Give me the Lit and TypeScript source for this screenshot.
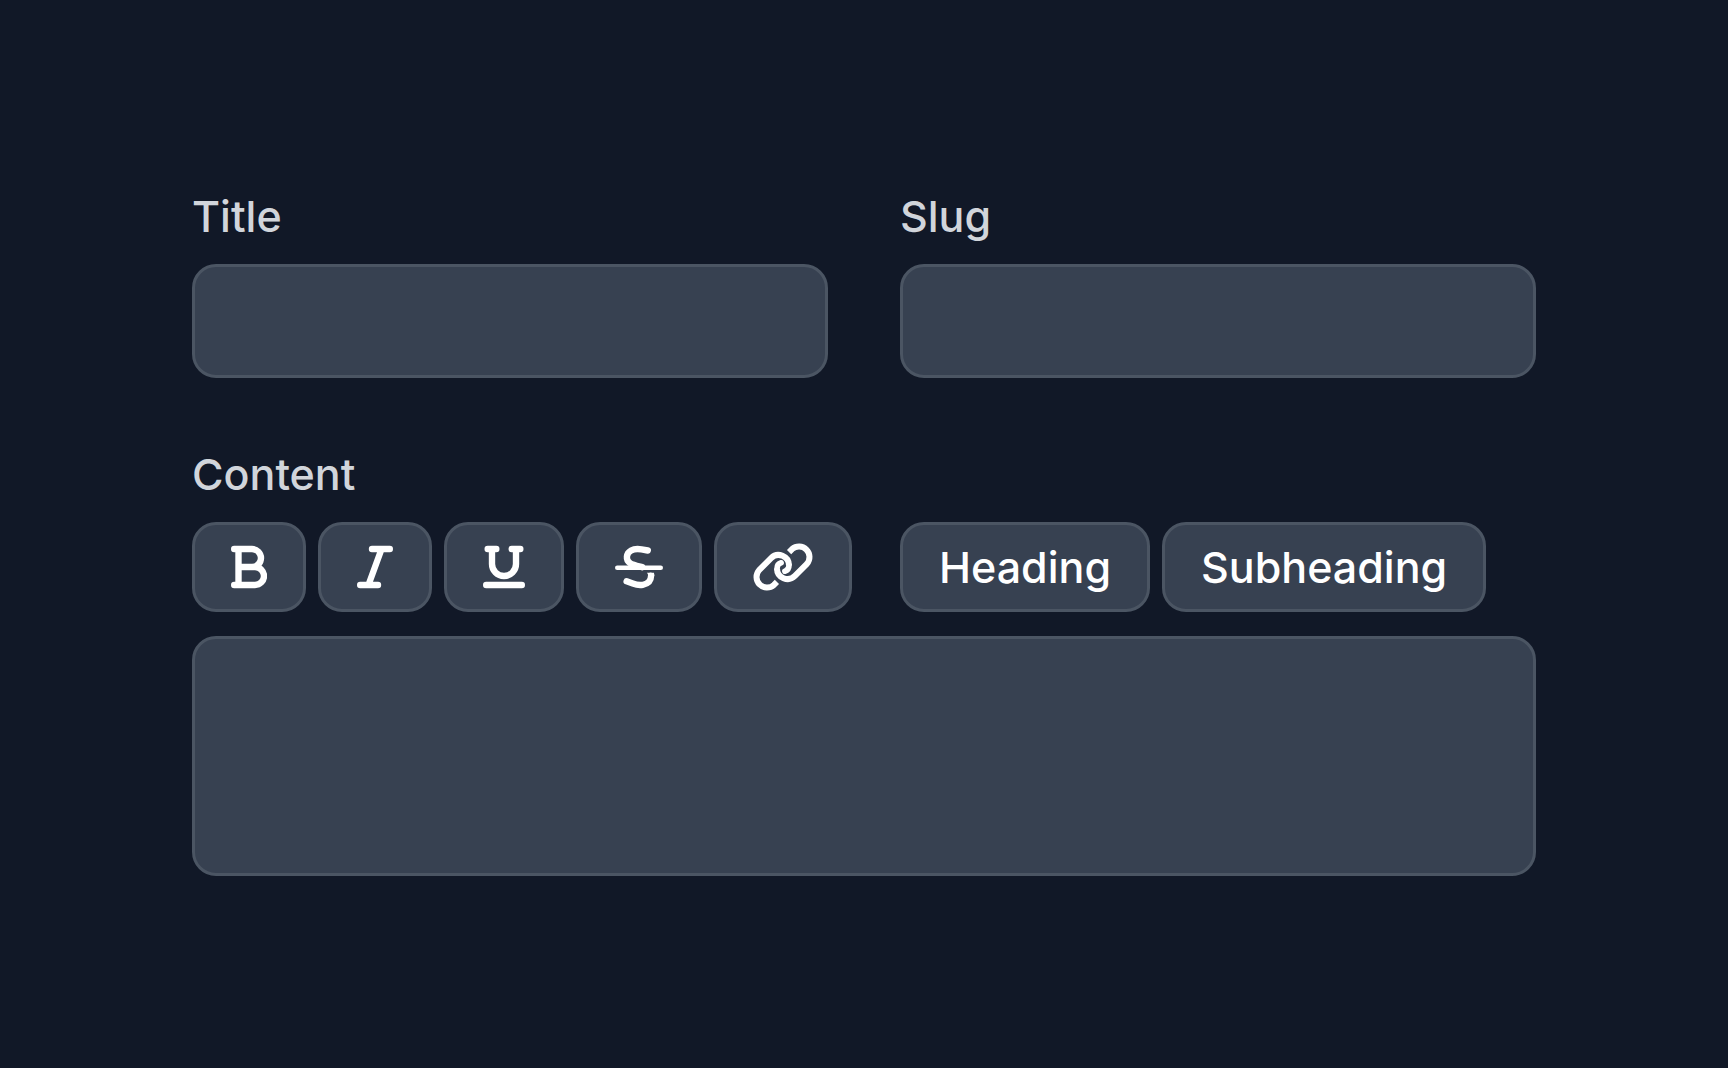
import { LitElement, html, css, svg } from "lit";
import { customElement } from "lit/decorators.js";

const icons = {
  bold: {
    label: "Bold",
    box: "0 0 384 512",
    cls: "w36",
    art: svg`<path d="M34 64H224A96 96 0 0 1 224 256H80M80 64V448M224 256H256A96 96 0 0 1 256 448H34" />`,
  },
  italic: {
    label: "Italic",
    box: "0 0 384 512",
    cls: "w36",
    art: svg`<path d="M160 64H350M34 448H224M262 64L122 448" />`,
  },
  underline: {
    label: "Underline",
    box: "0 0 448 512",
    cls: "w42",
    art: svg`<path d="M50 64H142M306 64H398M96 64V224A128 128 0 0 0 352 224V64M34 448H414" />`,
  },
  strike: {
    label: "Strikethrough",
    box: "0 0 512 512",
    cls: "w48",
    art: svg`
      <path d="M350 80L283 68C240 61 200 64 172 80C118 110 110 180 160 214C186 232 230 242 290 258" />
      <path class="thin" d="M24 264H488" />
      <path d="M124 409L190 433C225 446 262 452 296 446C346 437 384 408 385 350" />
      <path class="fill" d="M340 318H415Q420 334 419 352L353 350Q354 330 340 318Z" />`,
  },
  link: {
    label: "Link",
    box: "0 0 640 512",
    cls: "w60",
    art: svg`
      <path class="flat" d="M385 97L417 65A112 112 0 0 1 575 223L447 351A112 112 0 0 1 256 272" />
      <path class="curl" d="M256 274C256 242 272 218 300 211" />
      <path class="flat" d="M255 415L223 447A112 112 0 0 1 65 289L193 161A112 112 0 0 1 384 240" />
      <path class="curl" d="M384 238C384 270 368 294 340 301" />`,
  },
};

@customElement("app-root")
export class AppRoot extends LitElement {
  static styles = css`
    :host {
      display: block;
      font-family: Inter, "Liberation Sans", sans-serif;
      font-size: 43px;
      line-height: 48px;
      font-weight: 500;
      color: #ffffff;
    }
    .page {
      box-sizing: border-box;
      min-height: 100vh;
      padding: 192px;
      background: #111827;
    }
    .form {
      display: grid;
      grid-template-columns: 1fr 1fr;
      gap: 72px;
    }
    .field {
      display: flex;
      flex-direction: column;
      gap: 24px;
      min-width: 0;
    }
    .wide {
      grid-column: 1 / -1;
    }
    .label {
      color: #d1d5db;
    }
    .control,
    .tool {
      box-sizing: border-box;
      margin: 0;
      border: 3px solid #4b5563;
      border-radius: 24px;
      background: #374151;
      color: inherit;
      font: inherit;
    }
    .control {
      display: block;
      width: 100%;
      padding: 30px 36px;
      resize: none;
    }
    .area {
      height: 240px;
    }
    .toolbar,
    .group {
      display: flex;
      flex-wrap: wrap;
      gap: 12px;
    }
    .toolbar {
      column-gap: 48px;
    }
    .tool {
      display: flex;
      align-items: center;
      padding: 18px 36px;
      cursor: pointer;
    }
    .icon {
      display: block;
      height: 48px;
      fill: none;
      stroke: currentColor;
      stroke-width: 68;
      stroke-linecap: round;
      stroke-linejoin: round;
    }
    .thin {
      stroke-width: 48;
    }
    .flat {
      stroke-width: 64;
      stroke-linecap: butt;
    }
    .curl {
      stroke-width: 60;
    }
    .fill {
      fill: currentColor;
      stroke: none;
    }
    .w36 {
      width: 36px;
    }
    .w42 {
      width: 42px;
    }
    .w48 {
      width: 48px;
    }
    .w60 {
      width: 60px;
    }
  `;

  render() {
    return html`
      <main class="page">
        <form class="form" @submit=${(e: Event) => e.preventDefault()}>
          <div class="field">
            <label class="label" for="title">Title</label>
            <input class="control" id="title" type="text" />
          </div>
          <div class="field">
            <label class="label" for="slug">Slug</label>
            <input class="control" id="slug" type="text" />
          </div>
          <div class="field wide">
            <label class="label" for="content">Content</label>
            <div class="toolbar">
              <div class="group">
                ${Object.values(icons).map(
                  (i) => html`<button class="tool" type="button" aria-label=${i.label}>
                    <svg class="icon ${i.cls}" viewBox=${i.box} aria-hidden="true">${i.art}</svg>
                  </button>`
                )}
              </div>
              <div class="group">
                <button class="tool" type="button">Heading</button>
                <button class="tool" type="button">Subheading</button>
              </div>
            </div>
            <textarea class="control area" id="content"></textarea>
          </div>
        </form>
      </main>
    `;
  }
}
